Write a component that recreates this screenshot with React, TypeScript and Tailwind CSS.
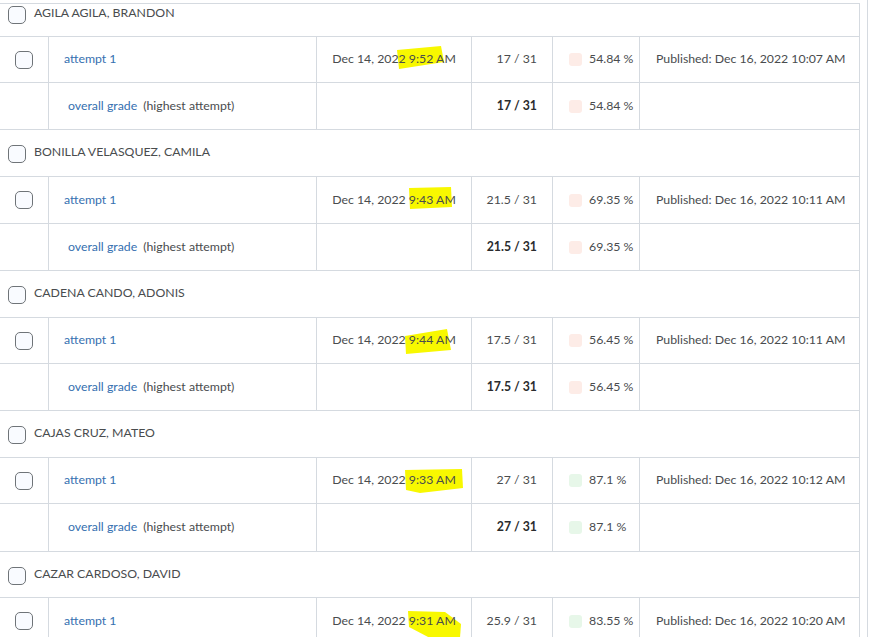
import React from "react";

type Pt = [number, number];
type Student = {
  name: string;
  time: string;
  score: string;
  pct: string;
  pass: boolean;
  pub: string;
  hl: Pt[];
  h: [number, number, number];
};

const students: Student[] = [
  {
    name: "AGILA AGILA, BRANDON",
    time: "9:52 AM",
    score: "17 / 31",
    pct: "54.84 %",
    pass: false,
    pub: "Published: Dec 16, 2022 10:07 AM",
    hl: [[80, 13], [124, 9], [127, 25], [82, 32]],
    h: [33, 46, 47],
  },
  {
    name: "BONILLA VELASQUEZ, CAMILA",
    time: "9:43 AM",
    score: "21.5 / 31",
    pct: "69.35 %",
    pass: false,
    pub: "Published: Dec 16, 2022 10:11 AM",
    hl: [[92, 11], [134, 10], [135, 30], [93, 32]],
    h: [47, 47, 47],
  },
  {
    name: "CADENA CANDO, ADONIS",
    time: "9:44 AM",
    score: "17.5 / 31",
    pct: "56.45 %",
    pass: false,
    pub: "Published: Dec 16, 2022 10:11 AM",
    hl: [[88, 18], [130, 11], [134, 32], [89, 36]],
    h: [47, 46, 47],
  },
  {
    name: "CAJAS CRUZ, MATEO",
    time: "9:33 AM",
    score: "27 / 31",
    pct: "87.1 %",
    pass: true,
    pub: "Published: Dec 16, 2022 10:12 AM",
    hl: [[88, 12], [145, 11], [146, 30], [103, 35], [89, 32]],
    h: [47, 46, 48],
  },
  {
    name: "CAZAR CARDOSO, DAVID",
    time: "9:31 AM",
    score: "25.9 / 31",
    pct: "83.55 %",
    pass: true,
    pub: "Published: Dec 16, 2022 10:20 AM",
    hl: [[91, 13], [128, 14], [144, 26], [143, 40], [113, 40], [92, 29]],
    h: [46, 47, 47],
  },
];

const Box = () => (
  <span className="block w-[18px] h-[18px] rounded-[5px] border border-[#6f7478] bg-[#f9fbff] shrink-0" />
);

const Sq = ({ pass }: { pass: boolean }) => (
  <span
    className={
      "inline-block w-[13px] h-[13px] rounded-[3px] mr-[7px] shrink-0 " +
      (pass ? "bg-[#e7f7e9]" : "bg-[#fdece7]")
    }
  />
);

const cell = "border-r border-[#d5dae0] h-full flex items-center";

function Group({ s, first }: { s: Student; first: boolean }) {
  const [h0, h1, h2] = s.h;
  return (
    <div>
      <div
        className="border-b border-[#d5dae0] overflow-hidden"
        style={{ height: h0 }}
      >
        <div
          className="flex items-center pl-2 h-[45px]"
          style={{ marginTop: first ? -13 : 0 }}
        >
          <span className="mt-[3px]">
            <Box />
          </span>
          <span className="ml-2 mb-[1px] text-[#494c4e]">{s.name}</span>
        </div>
      </div>
      <div
        className="grid grid-cols-[49px_268px_155px_81px_87px_220px] border-b border-[#d5dae0]"
        style={{ height: h1 }}
      >
        <div className={cell + " justify-center"}>
          <Box />
        </div>
        <div className={cell + " pl-[15px] text-[#3570b0]"}>attempt 1</div>
        <div className={cell + " justify-center relative"}>
          <svg className="absolute left-0 top-0" width="155" height="47">
            <polygon
              points={s.hl.map((p) => p.join(",")).join(" ")}
              fill="#f8f800"
            />
          </svg>
          <span className="relative">Dec 14, 2022 {s.time}</span>
        </div>
        <div className={cell + " justify-end pr-[15px]"}>{s.score}</div>
        <div className={cell + " pl-4"}>
          <Sq pass={s.pass} />
          {s.pct}
        </div>
        <div className={cell + " pl-4"}>{s.pub}</div>
      </div>
      <div
        className="grid grid-cols-[49px_268px_155px_81px_87px_220px] border-b border-[#d5dae0]"
        style={{ height: h2 }}
      >
        <div className={cell} />
        <div className={cell + " pl-[19px]"}>
          <span className="text-[#3570b0]">overall grade</span>
          <span className="ml-[6px]">(highest attempt)</span>
        </div>
        <div className={cell} />
        <div className={cell + " justify-end pr-[15px] font-bold text-[#2a2c2e]"}>
          {s.score}
        </div>
        <div className={cell + " pl-4"}>
          <Sq pass={s.pass} />
          {s.pct}
        </div>
        <div className={cell} />
      </div>
    </div>
  );
}

export default function App() {
  return (
    <div
      className="w-[879px] h-[637px] overflow-hidden bg-white flex text-[12.3px] text-[#494c4e]"
      style={{ fontFamily: "Lato, 'Noto Sans', sans-serif" }}
    >
      <div className="w-[860px] pt-[3px] shrink-0">
        <div className="border-t border-r border-[#d5dae0]">
          {students.map((s, i) => (
            <Group key={s.name} s={s} first={i === 0} />
          ))}
        </div>
      </div>
      <div className="w-[7px] shrink-0" />
      <div className="flex-1 border-l border-[#d5dae0]" />
    </div>
  );
}
